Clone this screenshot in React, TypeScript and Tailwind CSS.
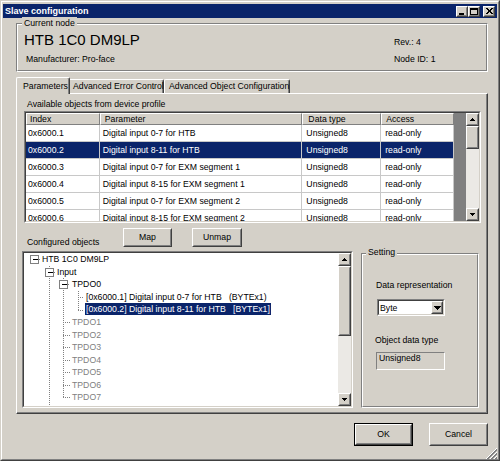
import React from "react";

const FONT = "font-['Liberation_Sans',Arial,sans-serif]";

function Raised({
  className = "",
  innerClassName = "",
  children,
}: {
  className?: string;
  innerClassName?: string;
  children?: React.ReactNode;
}) {
  return (
    <div className={`border border-t-white border-l-white border-r-[#404040] border-b-[#404040] bg-[#d4d0c8] ${className}`}>
      <div className={`w-full h-full border border-t-[#d4d0c8] border-l-[#d4d0c8] border-r-[#808080] border-b-[#808080] flex items-center justify-center ${innerClassName}`}>
        {children}
      </div>
    </div>
  );
}

function Sunken({
  className = "",
  innerClassName = "",
  children,
}: {
  className?: string;
  innerClassName?: string;
  children?: React.ReactNode;
}) {
  return (
    <div className={`border border-t-[#808080] border-l-[#808080] border-r-white border-b-white ${className}`}>
      <div className={`w-full h-full border border-t-[#404040] border-l-[#404040] border-r-[#d4d0c8] border-b-[#d4d0c8] ${innerClassName}`}>
        {children}
      </div>
    </div>
  );
}

function Arrow({ dir }: { dir: "up" | "down" }) {
  return (
    <svg width="5" height="3" viewBox="0 0 5 3" shapeRendering="crispEdges">
      {dir === "up" ? (
        <polygon points="2.5,0 5,3 0,3" fill="#000" />
      ) : (
        <polygon points="0,0 5,0 2.5,3" fill="#000" />
      )}
    </svg>
  );
}

function ScrollBar({ thumbClass, trackClass }: { thumbClass: string; trackClass: string }) {
  return (
    <div className="w-[13px] h-full flex flex-col bg-[#ebe9e5]">
      <Raised className="h-[13px] w-[13px] shrink-0">
        <Arrow dir="up" />
      </Raised>
      <Raised className={`w-[13px] shrink-0 ${thumbClass}`} />
      <div className={`flex-1 ${trackClass}`} />
      <Raised className="h-[13px] w-[13px] shrink-0">
        <Arrow dir="down" />
      </Raised>
    </div>
  );
}

function TitleBtn({ kind }: { kind: "min" | "max" | "close" }) {
  return (
    <Raised className="w-[12px] h-[11px]">
      <svg width="8" height="7" viewBox="0 0 8 7" shapeRendering="crispEdges">
        {kind === "min" && <rect x="1" y="5" width="5" height="2" fill="#000" />}
        {kind === "max" && (
          <>
            <rect x="0.5" y="0.5" width="7" height="6" fill="none" stroke="#000" />
            <rect x="0" y="0" width="8" height="2" fill="#000" />
          </>
        )}
        {kind === "close" && (
          <path d="M1 0 L7 6 M2 0 L8 6 M7 0 L1 6 M8 0 L2 6" stroke="#000" strokeWidth="1" fill="none" />
        )}
      </svg>
    </Raised>
  );
}

const COLS = ["w-[74px]", "w-[203px]", "w-[79px]", "w-[73px]"];
const CELL_PL = ["pl-[2px]", "pl-[3px]", "pl-[4px]", "pl-[4px]"];
const HEAD_PL = ["pl-[3px]", "pl-[4px]", "pl-[5px]", "pl-[4px]"];
const HEADERS = ["Index", "Parameter", "Data type", "Access"];
const ROWS = [
  ["0x6000.1", "Digital input 0-7 for HTB", "Unsigned8", "read-only"],
  ["0x6000.2", "Digital input 8-11 for HTB", "Unsigned8", "read-only"],
  ["0x6000.3", "Digital input 0-7 for EXM segment 1", "Unsigned8", "read-only"],
  ["0x6000.4", "Digital input 8-15 for EXM segment 1", "Unsigned8", "read-only"],
  ["0x6000.5", "Digital input 0-7 for EXM segment 2", "Unsigned8", "read-only"],
  ["0x6000.6", "Digital input 8-15 for EXM segment 2", "Unsigned8", "read-only"],
];

const LEVEL_PL: Record<number, string> = {
  0: "pl-[17px]",
  1: "pl-[32px]",
  2: "pl-[47px]",
  3: "pl-[61px]",
};

const TREE: { level: number; text: string; grey?: boolean; selected?: boolean }[] = [
  { level: 0, text: "HTB 1C0 DM9LP" },
  { level: 1, text: "Input" },
  { level: 2, text: "TPDO0" },
  { level: 3, text: "[0x6000.1] Digital input 0-7 for HTB   (BYTEx1)" },
  { level: 3, text: "[0x6000.2] Digital input 8-11 for HTB   [BYTEx1]", selected: true },
  { level: 2, text: "TPDO1", grey: true },
  { level: 2, text: "TPDO2", grey: true },
  { level: 2, text: "TPDO3", grey: true },
  { level: 2, text: "TPDO4", grey: true },
  { level: 2, text: "TPDO5", grey: true },
  { level: 2, text: "TPDO6", grey: true },
  { level: 2, text: "TPDO7", grey: true },
];

function TreeLines() {
  const RH = 12.56;
  const cy = (i: number) => Math.round(6.28 + RH * i) + 0.5;
  const p = (v: number) => Math.round(v) + 0.5;
  const cx = [10, 24.6, 39.2, 53.8];
  const dash = { stroke: "#808080", strokeWidth: 1, strokeDasharray: "1 1", fill: "none" };
  const v = (x: number, y1: number, y2: number, k: string) => (
    <line key={k} x1={p(x)} x2={p(x)} y1={Math.round(y1)} y2={Math.round(y2)} {...dash} />
  );
  const h = (x1: number, x2: number, row: number, k: string) => (
    <line key={k} x1={Math.round(x1)} x2={Math.round(x2)} y1={cy(row)} y2={cy(row)} {...dash} />
  );
  const box = (lvl: number, row: number) => {
    const x = Math.round(cx[lvl]) - 4 + 0.5;
    const y = cy(row) - 4;
    return (
      <g key={`b${row}`}>
        <rect x={x} y={y} width="8" height="8" fill="#fff" stroke="#808080" />
        <line x1={x + 2} x2={x + 7} y1={cy(row)} y2={cy(row)} stroke="#000" />
      </g>
    );
  };
  return (
    <svg className="absolute inset-0" width="314" height="153" shapeRendering="crispEdges">
      {v(cx[1], RH, 153, "v1")}
      {v(cx[2], RH * 2, 6.28 + RH * 11, "v2")}
      {v(cx[3], RH * 3, 6.28 + RH * 4, "v3")}
      {h(cx[0] + 5, 16, 0, "h0")}
      {h(cx[1] + 5, 31, 1, "h1")}
      {h(cx[2] + 5, 46, 2, "h2")}
      {h(cx[3], 60, 3, "h3")}
      {h(cx[3], 60, 4, "h4")}
      {[5, 6, 7, 8, 9, 10, 11].map((r) => h(cx[2], 46, r, `hh${r}`))}
      {box(0, 0)}
      {box(1, 1)}
      {box(2, 2)}
    </svg>
  );
}

function Grip() {
  const lines: React.ReactNode[] = [];
  [0, 4, 8].forEach((k) => {
    lines.push(<line key={`w${k}`} x1={k} y1={11} x2={11} y2={k} stroke="#fff" />);
    lines.push(<line key={`g${k}`} x1={k + 1} y1={11} x2={11} y2={k + 1} stroke="#808080" />);
    lines.push(<line key={`h${k}`} x1={k + 2} y1={11} x2={11} y2={k + 2} stroke="#808080" />);
  });
  return (
    <svg width="11" height="11" viewBox="0 0 11 11">
      {lines}
    </svg>
  );
}

export default function App() {
  return (
    <div
      className={`w-[500px] h-[461px] overflow-hidden bg-[#d4d0c8] border border-t-[#d4d0c8] border-l-[#d4d0c8] border-r-[#404040] border-b-[#404040] ${FONT} text-[8.7px] leading-[13px] text-black whitespace-nowrap`}
    >
      <div className="h-full flex flex-col border border-t-white border-l-white border-r-[#808080] border-b-[#808080] px-[1px] pt-[2px]">
        {/* Title bar */}
        <div className="h-[14px] shrink-0 bg-[#0a246a] flex items-center justify-between pl-[2px] pr-[2px]">
          <span className="text-white font-bold text-[9px] leading-[14px]">Slave configuration</span>
          <div className="flex items-center">
            <TitleBtn kind="min" />
            <TitleBtn kind="max" />
            <div className="ml-[3px]">
              <TitleBtn kind="close" />
            </div>
          </div>
        </div>

        {/* Current node group */}
        <div className="ml-[13px] mt-[5px] w-[472px] h-[49px] shrink-0 border border-t-[#808080] border-l-[#808080] border-r-white border-b-white">
          <div className="h-full border border-t-white border-l-white border-r-[#808080] border-b-[#808080] flex flex-col">
            <span className="self-start -mt-[8.5px] ml-[4px] px-[2px] bg-[#d4d0c8] leading-[13px]">Current node</span>
            <div className="flex pl-[6px] mt-[0.5px]">
              <div className="w-[370px] flex flex-col">
                <div className="text-[15px] leading-[20px]">HTB 1C0 DM9LP</div>
                <div className="mt-[2.5px] pl-[2px] leading-[13px]">Manufacturer: Pro-face</div>
              </div>
              <div className="flex flex-col pt-[5.5px]">
                <div>Rev.: 4</div>
                <div className="mt-[4px]">Node ID: 1</div>
              </div>
            </div>
          </div>
        </div>

        {/* Tabs */}
        <div className="ml-[13px] mt-[5px] h-[16px] shrink-0 flex items-end">
          <div className="relative z-10 -mb-[1px] h-[17px] w-[54px] border-t border-l border-t-white border-l-white border-r border-r-[#404040] rounded-tl-[2px] rounded-tr-[2px] shadow-[inset_-1px_0_0_#808080] bg-[#d4d0c8] pl-[6px] pt-[1.5px]">
            Parameters
          </div>
          <div className="h-[14px] w-[94px] border-t border-t-white border-r border-r-[#404040] rounded-tr-[2px] shadow-[inset_-1px_0_0_#808080] pl-[3px]">
            Advanced Error Control
          </div>
          <div className="h-[14px] w-[126px] border-t border-l border-t-white border-l-white border-r border-r-[#404040] rounded-tl-[2px] rounded-tr-[2px] shadow-[inset_-1px_0_0_#808080] pl-[4px]">
            Advanced Object Configuration
          </div>
        </div>

        {/* Tab panel */}
        <div className="ml-[13px] w-[472px] h-[321px] shrink-0 border border-t-white border-l-white border-r-[#404040] border-b-[#404040] shadow-[inset_-1px_-1px_0_#808080] flex flex-col">
          <div className="ml-[10px] mt-[3.5px]">Available objects from device profile</div>

          {/* List view */}
          <Sunken className="ml-[7px] mt-[0.5px] w-[457px] h-[112px] shrink-0" innerClassName="flex">
            <div className="w-[429px] h-full bg-white flex flex-col overflow-hidden">
              <div className="flex h-[12px] shrink-0 bg-[#d4d0c8]">
                {HEADERS.map((t, i) => (
                  <div
                    key={t}
                    className={`${COLS[i]} h-[12px] border-t border-l border-t-white border-l-white border-r border-b border-r-[#808080] border-b-[#808080] ${HEAD_PL[i]} leading-[10px]`}
                  >
                    {t}
                  </div>
                ))}
              </div>
              {ROWS.map((r, ri) => {
                const sel = ri === 1;
                return (
                  <div key={r[0]} className={`flex h-[17px] shrink-0 ${sel ? "bg-[#0a246a] text-white" : ""}`}>
                    {r.map((c, ci) => (
                      <div
                        key={ci}
                        className={`${COLS[ci]} h-[17px] border-r border-b border-r-[#c8c8c8] border-b-[#c8c8c8] ${CELL_PL[ci]} leading-[16px]`}
                      >
                        {c}
                      </div>
                    ))}
                  </div>
                );
              })}
            </div>
            <div className="w-[12px] h-full bg-[#808080]" />
            <ScrollBar thumbClass="h-[23px]" trackClass="bg-[#ebe9e5]" />
          </Sunken>

          {/* Map / Unmap */}
          <div className="flex items-start mt-[5px] shrink-0">
            <div className="ml-[10px] w-[96px] pt-[7.5px]">Configured objects</div>
            <Raised className="w-[49px] h-[19px]">Map</Raised>
            <Raised className="ml-[20px] w-[50px] h-[19px]">Unmap</Raised>
          </div>

          {/* Lower */}
          <div className="flex items-start mt-[2.5px]">
            <Sunken className="ml-[5px] w-[331px] h-[157px] shrink-0" innerClassName="flex">
              <div className="relative flex-1 h-full bg-white overflow-hidden">
                <TreeLines />
                <div className="relative flex flex-col">
                  {TREE.map((n, i) => (
                    <div key={i} className={`h-[12.56px] flex items-center ${LEVEL_PL[n.level]}`}>
                      <span
                        className={`px-[1px] leading-[12px] whitespace-pre ${
                          n.selected ? "bg-[#0a246a] text-white" : n.grey ? "text-[#808080]" : "text-black"
                        }`}
                      >
                        {n.text}
                      </span>
                    </div>
                  ))}
                </div>
              </div>
              <ScrollBar thumbClass="h-[70px]" trackClass="bg-[#ebe9e5]" />
            </Sunken>

            {/* Setting group */}
            <div className="ml-[8px] mt-[2px] w-[118px] h-[155px] shrink-0 border border-t-[#808080] border-l-[#808080] border-r-white border-b-white">
              <div className="h-full border border-t-white border-l-white border-r-[#808080] border-b-[#808080] flex flex-col">
                <span className="self-start -mt-[9.5px] ml-[3px] px-[2px] bg-[#d4d0c8] leading-[13px]">Setting</span>
                <div className="ml-[13px] mt-[20px]">Data representation</div>
                <Sunken className="ml-[14px] mt-[7.5px] w-[68px] h-[17px] shrink-0" innerClassName="bg-white flex items-center justify-between">
                  <span className="pl-[1px] leading-[12px]">Byte</span>
                  <Raised className="w-[12px] h-[13px]">
                    <svg width="7" height="4" viewBox="0 0 7 4" shapeRendering="crispEdges">
                      <polygon points="0,0 7,0 3.5,4" fill="#000" />
                    </svg>
                  </Raised>
                </Sunken>
                <div className="ml-[12px] mt-[17.5px]">Object data type</div>
                <div className="ml-[13px] mt-[5.5px] w-[69px] h-[18px] shrink-0 border border-t-[#808080] border-l-[#808080] border-r-white border-b-white pl-[2px] leading-[11px]">
                  Unsigned8
                </div>
              </div>
            </div>
          </div>
        </div>

        {/* Bottom buttons */}
        <div className="flex justify-end mt-[9px] pr-[9px] shrink-0">
          <div className="border border-black">
            <Raised className="w-[57px] h-[21px]">OK</Raised>
          </div>
          <Raised className="ml-[16px] w-[59px] h-[23px]">Cancel</Raised>
        </div>
        <div className="flex justify-end mt-[2px] shrink-0">
          <Grip />
        </div>
      </div>
    </div>
  );
}
